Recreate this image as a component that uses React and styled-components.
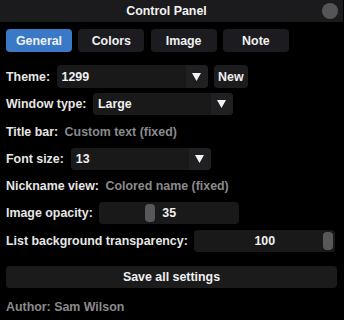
import React from 'react';
import styled, { createGlobalStyle } from 'styled-components';

const GlobalStyle = createGlobalStyle`
  html, body {
    margin: 0;
    padding: 0;
    background: #000;
  }
  body {
    font-family: "Liberation Sans", Arial, sans-serif;
    font-size: 12.4px;
    font-weight: bold;
    color: #e6e6e6;
  }
`;

const Window = styled.div`
  width: 344px;
  height: 320px;
  background: #000;
  display: flex;
  flex-direction: column;
`;

const TitleBar = styled.div`
  height: 22px;
  margin-right: 1px;
  background: #1b1b1d;
  display: flex;
  align-items: center;
  position: relative;
`;

const Title = styled.div`
  flex: 1;
  text-align: center;
  padding-right: 10px;
  color: #f2f2f2;
`;

const CloseDot = styled.div`
  position: absolute;
  right: 5px;
  top: 3px;
  width: 16px;
  height: 16px;
  border-radius: 50%;
  background: #555557;
`;

const Body = styled.div`
  padding: 7px 7px 0 6px;
  display: flex;
  flex-direction: column;
`;

const Tabs = styled.div`
  display: flex;
  gap: 6.3px;
  margin-bottom: 13px;
`;

const Tab = styled.div`
  width: 66px;
  height: 23px;
  border-radius: 4px;
  display: flex;
  align-items: center;
  justify-content: center;
  background: ${(p) => (p.$active ? '#3a78c8' : '#1c1c20')};
  color: #f0f0f0;
`;

const Rows = styled.div`
  display: flex;
  flex-direction: column;
  gap: 5.3px;
`;

const Row = styled.div`
  height: ${(p) => p.$h || 22}px;
  display: flex;
  align-items: center;
  gap: ${(p) => p.$gap || 6.5}px;
`;

const Label = styled.span`
  color: #e6e6e6;
  white-space: nowrap;
`;

const Muted = styled.span`
  color: #8a8a8c;
  white-space: nowrap;
`;

const Combo = styled.div`
  width: ${(p) => p.$w || 140}px;
  height: 100%;
  display: flex;
  border-radius: 4px;
  overflow: hidden;
  background: #19191a;
`;

const ComboText = styled.div`
  flex: 1;
  padding-left: 5px;
  display: flex;
  align-items: center;
  color: #f0f0f0;
`;

const ComboArrow = styled.div`
  width: 22px;
  display: flex;
  align-items: center;
  justify-content: center;
  background: #202022;
`;

const SmallButton = styled.div`
  height: 100%;
  padding: 0 4px;
  border-radius: 4px;
  background: #1c1c1e;
  display: flex;
  align-items: center;
  color: #f0f0f0;
`;

const Slider = styled.div`
  width: ${(p) => p.$w || 140}px;
  height: 100%;
  border-radius: 4px;
  background: #19191a;
  position: relative;
  display: flex;
  align-items: center;
  justify-content: center;
  color: #f0f0f0;
`;

const Grab = styled.div`
  position: absolute;
  top: 2px;
  bottom: 2px;
  width: 10px;
  border-radius: 4px;
  background: #58585a;
`;

const SaveButton = styled.div`
  margin-top: 14px;
  height: 22px;
  border-radius: 4px;
  background: #1b1b1c;
  display: flex;
  align-items: center;
  justify-content: center;
  color: #f0f0f0;
`;

const Author = styled.div`
  margin-top: 12px;
  color: #8a8a8c;
`;

function Arrow() {
  return (
    <svg width="9" height="8" viewBox="0 0 9 8">
      <path d="M0 0 H9 L4.5 8 Z" fill="#f2f2f2" />
    </svg>
  );
}

function Select({ value, width }) {
  return (
    <Combo $w={width}>
      <ComboText>{value}</ComboText>
      <ComboArrow>
        <Arrow />
      </ComboArrow>
    </Combo>
  );
}

function Range({ value, min, max, width }) {
  const usable = width - 14;
  const left = 2 + (usable * (value - min)) / (max - min);
  return (
    <Slider $w={width}>
      <Grab style={{ left }} />
      {value}
    </Slider>
  );
}

export default function App() {
  const tabs = ['General', 'Colors', 'Image', 'Note'];
  return (
    <>
      <GlobalStyle />
      <Window>
        <TitleBar>
          <Title>Control Panel</Title>
          <CloseDot />
        </TitleBar>
        <Body>
          <Tabs>
            {tabs.map((t) => (
              <Tab key={t} $active={t === 'General'}>{t}</Tab>
            ))}
          </Tabs>
          <Rows>
            <Row $h={23}>
              <Label>Theme:</Label>
              <Select value="1299" width={151} />
              <SmallButton>New</SmallButton>
            </Row>
            <Row>
              <Label>Window type:</Label>
              <Select value="Large" width={140} />
            </Row>
            <Row>
              <Label>Title bar:</Label>
              <Muted>Custom text (fixed)</Muted>
            </Row>
            <Row $gap={7}>
              <Label>Font size:</Label>
              <Select value="13" width={140} />
            </Row>
            <Row>
              <Label>Nickname view:</Label>
              <Muted>Colored name (fixed)</Muted>
            </Row>
            <Row>
              <Label>Image opacity:</Label>
              <Range value={35} min={0} max={100} width={140} />
            </Row>
            <Row>
              <Label>List background transparency:</Label>
              <Range value={100} min={0} max={100} width={141} />
            </Row>
          </Rows>
          <SaveButton>Save all settings</SaveButton>
          <Author>Author: Sam Wilson</Author>
        </Body>
      </Window>
    </>
  );
}
